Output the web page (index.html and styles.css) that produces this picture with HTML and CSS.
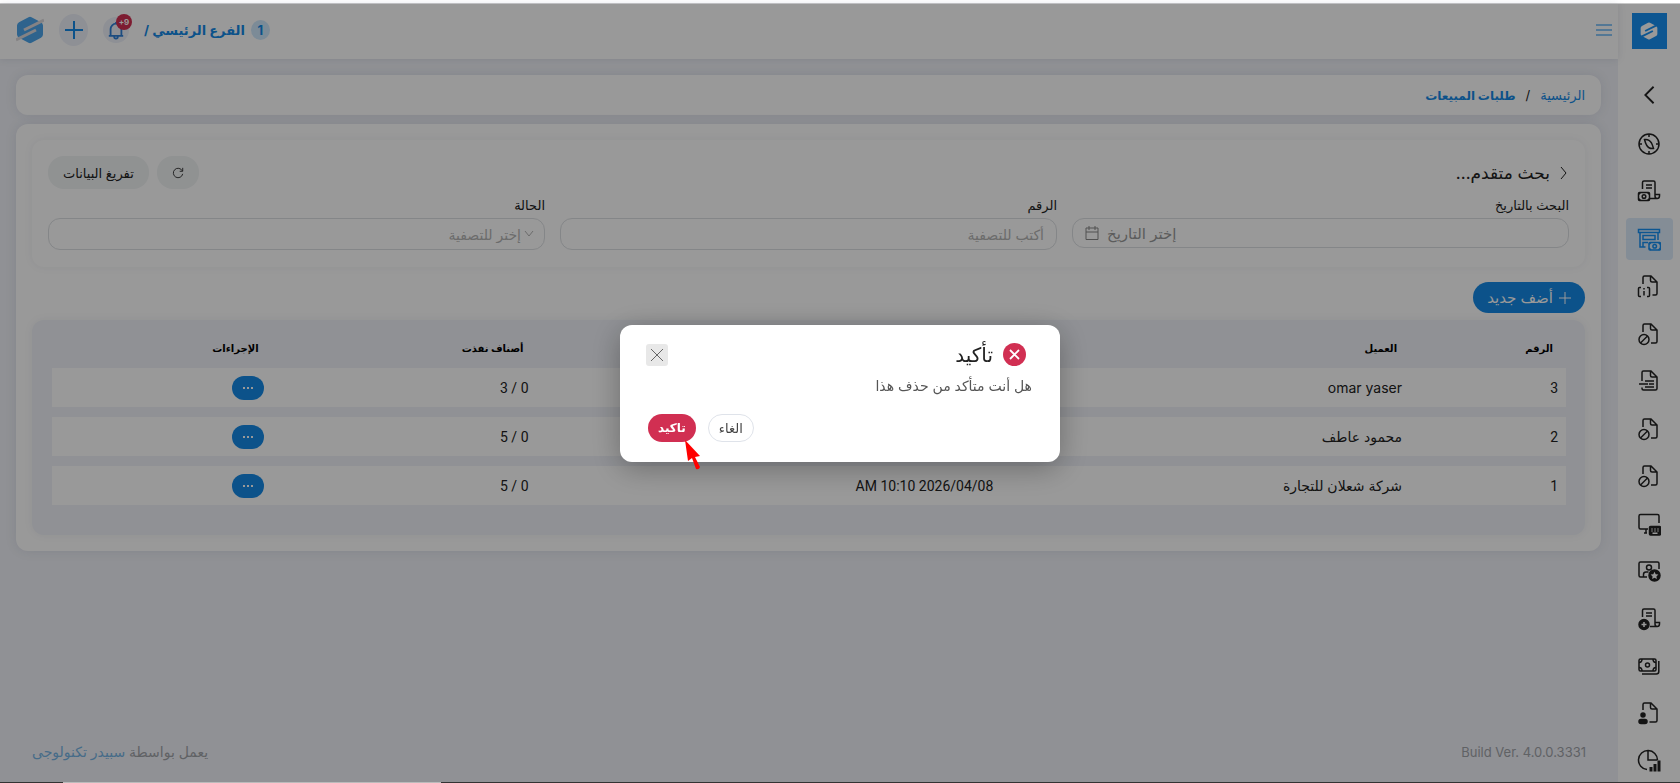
FILE: index.html
```html
<!DOCTYPE html>
<html lang="ar" dir="rtl">
<head>
    <meta charset="UTF-8">
    <meta name="viewport" content="width=device-width, initial-scale=1.0">
    <title>طلبات المبيعات</title>
    <link rel="stylesheet" href="styles.css">
</head>
<body>

<!-- Shared icons -->
<svg class="sprite" aria-hidden="true">
    <symbol id="i-logo" viewBox="0 0 28 28">
        <path d="M12.500 1.200Q14 .4 15.500 1.200L25 6.200Q27 7.500 27 9.500V18.500Q27 20.500 25 21.800L15.500 26.800Q14 27.600 12.500 26.800L3 21.800Q1 20.500 1 18.500V9.500Q1 7.500 3 6.200Z"/>
        <path class="slit" d="M8 14L28 4M0 24L20 14"/>
    </symbol>
    <symbol id="i-file-ban" viewBox="0 0 24 24">
        <path d="M6 10V3.500Q6 2 7.500 2H14l6 6v11.500q0 1.500-1.500 1.500H14M13.500 2v4.500Q13.500 8 15 8h5"/>
        <circle cx="7" cy="17.500" r="5"/><path d="M3.500 21l7-7"/>
    </symbol>
    <symbol id="i-receipt" viewBox="0 0 24 24">
        <path d="M5.500 10V3.500Q5.500 2 7 2h9.500Q18 2 18 3.500V17q0 2.500 2.200 2.500T22.500 17v-1.500H18M13 19.500h7.500M9 6h6M9 9h6"/>
    </symbol>
</svg>

<div class="window-edge"></div>

<div class="app">
    <aside class="sidebar">
        <a class="brand" href="#" aria-label="سبيدر"><svg><use href="#i-logo"/></svg></a>
        <button class="collapse" type="button" aria-label="طي القائمة">
            <svg viewBox="0 0 24 24"><path d="M17 3L8 12l9 9"/></svg>
        </button>
        <nav class="menu">
            <a href="#" aria-label="لوحة التحكم"><svg viewBox="0 0 24 24"><circle cx="12" cy="12" r="10"/><path d="M12 2v3M12 19v3M2 12h3M19 12h3M7.500 7.500c3-.5 5.500 1 7 3.500 1 2 1.500 3.500 2 5.500-3 .5-5.500-1-7-3.500-1-2-1.500-3.500-2-5.500z"/></svg></a>
            <a href="#" aria-label="الفواتير"><svg viewBox="0 0 24 24"><use href="#i-receipt"/><rect x="1.500" y="13.500" width="11" height="8" rx="1"/><circle cx="7" cy="17.500" r="1.800"/><path d="M1.500 15.500l2-2M12.500 15.500l-2-2M1.500 19.500l2 2M12.500 19.500l-2 2"/></svg></a>
            <a class="active" href="#" aria-label="طلبات المبيعات"><svg viewBox="0 0 24 24"><path d="M1.500 2.500h21v3h-21zM3 5.500V20h5.500M21 5.500V13M6 8.500h12v4H6zM6 20v-4.500h5"/><rect x="12" y="15.500" width="11.500" height="7.500" rx="1"/><circle cx="17.700" cy="19.200" r="1.800"/><path d="M12 17.500l2-2M23.500 17.500l-2-2M12 21l2 2M23.500 21l-2 2"/></svg></a>
            <a href="#" aria-label="معلومات"><svg viewBox="0 0 24 24"><path d="M6 10V3.500Q6 2 7.500 2H14l6 6v11.500q0 1.500-1.500 1.500H15.500M13.500 2v4.500Q13.500 8 15 8h5M4 13.500H2.500Q1.500 13.500 1.500 14.500v7q0 1 1 1H4M10 13.500h1.500q1 0 1 1v7q0 1-1 1H10M7 17v4.500M7 14v1.500"/></svg></a>
            <a href="#" aria-label="ملغاة"><svg><use href="#i-file-ban"/></svg></a>
            <a href="#" aria-label="مستند"><svg viewBox="0 0 24 24"><path d="M5 12V3.500Q5 2 6.500 2H14l6 6v11.500q0 1.500-1.500 1.500h-12Q5 21 5 19.500V18.500M13.500 2v4.500Q13.500 8 15 8h5M2 15h9M8 12h9M12 15h5M8 18h9"/></svg></a>
            <a href="#" aria-label="مرتجعات"><svg><use href="#i-file-ban"/></svg></a>
            <a href="#" aria-label="مرفوضة"><svg><use href="#i-file-ban"/></svg></a>
            <a href="#" aria-label="نقطة البيع"><svg viewBox="0 0 24 24"><path d="M22 11V4Q22 2.500 20.500 2.500h-17Q2 2.500 2 4v11.500Q2 17 3.500 17H11M9 17v4M7 21h3"/><rect class="solid" x="12.500" y="14.500" width="11" height="8.500" rx="1"/><path class="cut" d="M14.500 17h1M17.500 17h1M20.500 17h1M14.500 19h1M17.500 19h1M20.500 19h1M15.500 21.300h5"/></svg></a>
            <a href="#" aria-label="العملاء"><svg viewBox="0 0 24 24"><path d="M22 10V4.500Q22 3 20.500 3h-17Q2 3 2 4.500v12Q2 18 3.500 18H10M6.500 18v-2.500Q6.500 13 9 13h2.500"/><circle cx="12" cy="8.500" r="2.500"/><circle class="solid" cx="17.500" cy="16.500" r="5.500"/><path class="star" d="M17.500 12.700l1.200 2.500 2.700.3-2 1.900.5 2.700-2.400-1.300-2.400 1.300.5-2.700-2-1.900 2.700-.3z"/></svg></a>
            <a href="#" aria-label="فاتورة جديدة"><svg viewBox="0 0 24 24"><use href="#i-receipt"/><circle class="solid" cx="7" cy="17.500" r="5"/><path class="cut" d="M7 15v5M4.500 17.500h5"/></svg></a>
            <a href="#" aria-label="المدفوعات"><svg viewBox="0 0 24 24"><rect x="2" y="5" width="17" height="12" rx="1.500"/><circle cx="10.500" cy="11" r="2"/><path d="M2 8.500q3 0 3-3.500M19 8.500q-3 0-3-3.500M2 13.500q3 0 3 3.500M19 13.500q-3 0-3 3.500M21.800 7v10.500q0 2.500-2.500 2.500H5"/></svg></a>
            <a href="#" aria-label="كشف حساب"><svg viewBox="0 0 24 24"><path d="M6 9V3.500Q6 2 7.500 2H14l6 6v11.500q0 1.500-1.500 1.500H12.500M13.500 2v4.500Q13.500 8 15 8h5"/><circle class="solid" cx="6" cy="14" r="2"/><rect class="solid" x="2" y="18.500" width="8" height="4" rx="2"/></svg></a>
            <a href="#" aria-label="التقارير"><svg viewBox="0 0 24 24"><path d="M20.500 11A9.500 9.500 0 1 0 10 20.500M11 2v9h9.500"/><path class="bars" d="M14 18v4.500M18 15v7.500M22 11.500v11"/></svg></a>
        </nav>
    </aside>

    <div class="main">
        <header class="topbar">
            <button class="toggle" type="button" aria-label="القائمة">
                <svg viewBox="0 0 16 14"><path d="M0 2h16M0 7h16M0 12h16"/></svg>
            </button>
            <div class="topbar-end">
                <div class="branch"><span class="branch-no">1</span><span>الفرع الرئيسي /</span></div>
                <button class="bell" type="button" aria-label="التنبيهات">
                    <svg viewBox="0 0 20 22"><path d="M2 17.500h16M4 17.500V10a6 6 0 0 1 12 0v7.500M10 4V2M8 18.500a2 2 0 0 0 4 0"/></svg>
                    <span class="badge">9+</span>
                </button>
                <button class="plus" type="button" aria-label="إضافة">
                    <svg viewBox="0 0 20 20"><path d="M10 1v18M1 10h18"/></svg>
                </button>
                <svg class="avatar"><use href="#i-logo"/></svg>
            </div>
        </header>

        <main class="content">
            <div class="breadcrumb">
                <a href="#">الرئيسية</a><span>/</span><strong>طلبات المبيعات</strong>
            </div>

            <section class="card">
                <form class="panel filters">
                    <div class="filters-head">
                        <h2><svg viewBox="0 0 12 12"><path d="M4 0l5 6-5 6"/></svg>بحث متقدم...</h2>
                        <div class="filters-actions">
                            <button class="pill refresh" type="button" aria-label="تحديث">
                                <svg viewBox="0 0 14 14"><path d="M12 4.500A5.500 5.500 0 1 0 12.500 8M12.500 1v4H9"/></svg>
                            </button>
                            <button class="pill" type="button">تفريغ البيانات</button>
                        </div>
                    </div>
                    <div class="fields">
                        <div class="field">
                            <label for="date">البحث بالتاريخ</label>
                            <div class="box date-box">
                                <svg viewBox="0 0 14 16"><path d="M1 3h12v11.500H1zM1 7h12M4 1v4M10 1v4"/></svg>
                                <input id="date" type="text" placeholder="إختر التاريخ">
                            </div>
                        </div>
                        <div class="field">
                            <label for="number">الرقم</label>
                            <div class="box"><input id="number" type="text" placeholder="أكتب للتصفية"></div>
                        </div>
                        <div class="field">
                            <label for="status">الحالة</label>
                            <div class="box select-box">
                                <svg viewBox="0 0 10 10"><path d="M1 2l4 5 4-5"/></svg>
                                <select id="status"><option>إختر للتصفية</option></select>
                            </div>
                        </div>
                    </div>
                </form>

                <button class="add" type="button"><svg viewBox="0 0 12 12"><path d="M6 0v12M0 6h12"/></svg>أضف جديد</button>

                <div class="panel orders">
                    <table>
                        <thead>
                            <tr>
                                <th class="col-no">الرقم</th>
                                <th class="col-client">العميل</th>
                                <th class="col-date"></th>
                                <th class="col-items">أصناف نفذت</th>
                                <th class="col-actions">الإجراءات</th>
                            </tr>
                        </thead>
                        <tbody>
                            <tr>
                                <td class="num">3</td>
                                <td>omar yaser</td>
                                <td class="num"></td>
                                <td class="num">0 / 3</td>
                                <td><button class="more" type="button" aria-label="خيارات"><i></i><i></i><i></i></button></td>
                            </tr>
                            <tr>
                                <td class="num">2</td>
                                <td>محمود عاطف</td>
                                <td class="num"></td>
                                <td class="num">0 / 5</td>
                                <td><button class="more" type="button" aria-label="خيارات"><i></i><i></i><i></i></button></td>
                            </tr>
                            <tr>
                                <td class="num">1</td>
                                <td>شركة شعلان للتجارة</td>
                                <td class="num">2026/04/08 10:10 AM</td>
                                <td class="num">0 / 5</td>
                                <td><button class="more" type="button" aria-label="خيارات"><i></i><i></i><i></i></button></td>
                            </tr>
                        </tbody>
                    </table>
                </div>
            </section>
        </main>

        <footer class="footer">
            <span class="version" dir="ltr">Build Ver. 4.0.0.3331</span>
            <span>يعمل بواسطة <a href="#">سبيدر تكنولوجى</a></span>
        </footer>
    </div>
</div>

<div class="overlay">
    <div class="modal" role="dialog" aria-modal="true" aria-labelledby="modal-title">
        <div class="modal-head">
            <span class="modal-icon"><svg viewBox="0 0 10 10"><path d="M0 0l10 10M10 0L0 10"/></svg></span>
            <h3 id="modal-title">تأكيد</h3>
            <button class="close" type="button" aria-label="إغلاق"><svg viewBox="0 0 12 12"><path d="M0 0l12 12M12 0L0 12"/></svg></button>
        </div>
        <p>هل أنت متأكد من حذف هذا</p>
        <div class="modal-actions">
            <button class="cancel" type="button">الغاء</button>
            <button class="confirm" type="button">تاكيد
                <svg class="pointer" viewBox="0 0 18 32"><path d="M1 1l15 16-5 1 5 10q-1 3-4 2L8 19l-4 3z"/></svg>
            </button>
        </div>
    </div>
</div>

<div class="taskbar"><i></i></div>

</body>
</html>
```
FILE: styles.css
```css
* {
    box-sizing: border-box;
}
body {
    margin: 0;
    height: 100vh;
    display: flex;
    flex-direction: column;
    overflow: hidden;
    background: #f0f2f8;
    color: #222;
    font-family: Inter, "DejaVu Sans", sans-serif;
    font-size: 14px;
}
svg {
    display: block;
    fill: none;
    stroke: currentColor;
}
button, input, select {
    font-family: inherit;
    margin: 0;
    border: 0;
    background: none;
    color: inherit;
}
button {
    display: flex;
    align-items: center;
    justify-content: center;
    padding: 0;
    cursor: pointer;
}
a {
    color: #1489e6;
    text-decoration: none;
}
.sprite {
    position: absolute;
    width: 0;
    height: 0;
}
.slit {
    fill: none;
    stroke: var(--slit);
    stroke-width: 3;
}
.window-edge {
    flex: none;
    height: 4px;
    background: #fff;
    border-bottom: 1px solid #c8c8c8;
}
.app {
    flex: 1;
    min-height: 0;
    display: flex;
}

/* Sidebar */
.sidebar {
    width: 62px;
    flex: none;
    display: flex;
    flex-direction: column;
    align-items: center;
    background: #fff;
    padding-top: 9px;
}
.brand {
    --slit: #1690f2;
    display: flex;
    align-items: center;
    justify-content: center;
    width: 35px;
    height: 36px;
    background: #1690f2;
}
.brand svg {
    width: 18px;
    height: 20px;
    fill: #fff;
    stroke: none;
}
.collapse {
    width: 42px;
    height: 42px;
    margin: 25px 0 7px;
}
.collapse svg {
    width: 22px;
    stroke-width: 2;
}
.menu {
    flex: 1;
    display: flex;
    flex-direction: column;
    justify-content: space-between;
}
.menu a {
    display: flex;
    align-items: center;
    justify-content: center;
    width: 47px;
    height: 42px;
    border-radius: 4px;
    color: #222;
}
.menu a.active {
    background: #dcebfb;
    color: #1690f2;
}
.menu svg {
    width: 24px;
    height: 24px;
    stroke-width: 1.5;
}
.solid {
    fill: currentColor;
}
.cut {
    stroke: #fff;
}
.star {
    fill: #fff;
    stroke: none;
}
.bars {
    stroke-width: 3;
}

/* Top bar */
.main {
    flex: 1;
    min-width: 0;
    display: flex;
    flex-direction: column;
}
.topbar {
    flex: none;
    height: 55px;
    display: flex;
    align-items: center;
    justify-content: space-between;
    padding: 0 6px 3px 16px;
    background: #fff;
    box-shadow: 0 0 8px rgba(40, 50, 90, .12);
}
.toggle svg {
    width: 16px;
    height: 14px;
    color: #1690f2;
}
.topbar-end {
    display: flex;
    align-items: center;
    gap: 15px;
}
.branch {
    display: flex;
    align-items: center;
    gap: 6px;
    color: #1489e6;
    font-size: 13px;
    font-weight: bold;
}
.branch-no {
    width: 19px;
    height: 20px;
    line-height: 20px;
    border-radius: 50%;
    background: #cfe8fc;
    text-align: center;
}
.bell, .plus {
    position: relative;
    border-radius: 50%;
    background: #edf0f9;
    color: #1489e6;
}
.bell {
    width: 26px;
    height: 26px;
    color: #2f7fd6;
}
.bell svg {
    width: 18px;
    height: 20px;
    stroke-width: 2;
}
.badge {
    position: absolute;
    top: -3px;
    right: -3px;
    width: 16px;
    height: 16px;
    border-radius: 50%;
    background: #d12f52;
    color: #fff;
    font-size: 8px;
    font-weight: bold;
    line-height: 16px;
}
.plus {
    width: 29px;
    height: 32px;
}
.plus svg {
    width: 20px;
    height: 20px;
    stroke-width: 2;
}
.avatar {
    --slit: #dcd9dc;
    width: 28px;
    height: 28px;
    fill: #4da6ec;
    stroke: none;
}

/* Content */
.content {
    flex: 1;
    display: flex;
    flex-direction: column;
    gap: 9px;
    padding: 16px 17px 0 16px;
}
.breadcrumb, .card {
    background: #fff;
    border-radius: 12px;
    box-shadow: 0 0 12px rgba(40, 50, 90, .1);
}
.breadcrumb {
    display: flex;
    align-items: center;
    gap: 10px;
    height: 40px;
    padding: 0 16px;
    font-size: 13px;
}
.breadcrumb strong {
    color: #1489e6;
    font-size: 12px;
}
.card {
    display: flex;
    flex-direction: column;
    align-items: flex-start;
    padding: 16px;
}
.panel {
    width: 100%;
    border-radius: 12px;
    box-shadow: 0 0 10px rgba(40, 50, 90, .06);
}
.filters {
    padding: 16px 16px 17px;
}
.filters-head {
    display: flex;
    justify-content: space-between;
    align-items: center;
}
.filters h2 {
    display: flex;
    align-items: center;
    gap: 7px;
    margin: 0;
    font-size: 17px;
    font-weight: normal;
}
.filters h2 svg {
    width: 12px;
    height: 12px;
}
.filters-actions {
    display: flex;
    gap: 8px;
}
.pill {
    height: 33px;
    padding: 0 15px;
    border-radius: 16px;
    background: #f0f3f4;
    font-size: 13px;
}
.refresh svg {
    width: 12px;
    height: 12px;
}
.fields {
    display: grid;
    grid-template-columns: repeat(3, 1fr);
    gap: 15px;
    align-items: start;
    padding-top: 6px;
}
.field label {
    display: block;
    line-height: 20px;
    margin-bottom: 3px;
    font-size: 13px;
}
.box {
    display: flex;
    align-items: center;
    height: 32px;
    padding: 0 12px;
    border: 1px solid #dde0e3;
    border-radius: 12px;
    color: #b4b4b4;
}
.box input, .box select {
    flex: 1;
    min-width: 0;
    padding: 0;
    font-size: 14px;
    outline: 0;
    appearance: none;
}
.box input::placeholder {
    color: #b4b4b4;
    opacity: 1;
}
.date-box {
    direction: ltr;
    gap: 8px;
    height: 30px;
    color: #888;
}
.date-box input {
    font-size: 15px;
}
.date-box input::placeholder {
    color: #999;
}
.date-box svg {
    width: 14px;
    height: 16px;
}
.select-box {
    padding: 0 10px;
    gap: 3px;
}
.select-box svg {
    width: 10px;
    height: 10px;
}
.add {
    gap: 6px;
    height: 31px;
    margin: 15px 0 7px;
    padding: 0 14px;
    border-radius: 16px;
    background: #1489e6;
    color: #fff;
    font-size: 15px;
}
.add svg {
    width: 12px;
    height: 12px;
}

/* Orders table */
.orders {
    background: #f0f2f8;
    padding: 0 19px 20px 20px;
}
.orders table {
    width: 100%;
    table-layout: fixed;
    border-collapse: separate;
    border-spacing: 0 10px;
}
.orders th {
    height: 28px;
    padding: 8px 13px 0;
    color: #000;
    font-size: 10px;
    text-align: right;
}
.orders td {
    height: 39px;
    padding: 0 8px;
    background: #fff;
}
.orders .num {
    font-family: Roboto, sans-serif;
}
.col-no {
    width: 10.3%;
}
.col-client {
    width: 27%;
}
.col-date {
    width: 30.7%;
}
.col-items {
    width: 17.5%;
}
.more {
    gap: 2px;
    width: 32px;
    height: 24px;
    border-radius: 12px;
    background: #1489e6;
}
.more i {
    width: 2px;
    height: 2px;
    background: #fff;
}

.footer {
    display: flex;
    justify-content: space-between;
    align-items: center;
    padding: 0 32px 22px;
    color: #a0a3a8;
    font-size: 14px;
}
.footer .version {
    font-size: 13px;
}
.footer a {
    color: #76b4e4;
}

/* Confirm dialog */
.overlay {
    position: fixed;
    inset: 4px 0 1px;
    display: flex;
    align-items: center;
    justify-content: center;
    background: rgba(0, 0, 0, .4);
}
.modal {
    width: 440px;
    padding: 18px 28px 20px 26px;
    background: #fff;
    border-radius: 12px;
    box-shadow: 0 6px 30px rgba(0, 0, 0, .3);
}
.modal-head {
    display: flex;
    align-items: center;
    gap: 10px;
    padding-right: 6px;
}
.modal-icon {
    display: flex;
    align-items: center;
    justify-content: center;
    width: 23px;
    height: 23px;
    border-radius: 50%;
    background: #d12f52;
    color: #fff;
}
.modal-icon svg {
    width: 9px;
    height: 9px;
    overflow: visible;
    stroke-width: 2;
}
.modal h3 {
    flex: 1;
    margin: 0;
    font-size: 20px;
    line-height: 24px;
    font-weight: normal;
}
.close {
    width: 22px;
    height: 22px;
    border-radius: 3px;
    background: #e8e8e8;
    color: #666;
}
.close svg {
    width: 12px;
    height: 12px;
}
.modal p {
    margin: 8px 0 17px;
    line-height: 22px;
    color: #555;
}
.modal-actions {
    display: flex;
    justify-content: flex-end;
    gap: 12px;
    padding-left: 2px;
}
.cancel, .confirm {
    height: 28px;
    padding: 0 10px;
    border-radius: 14px;
    font-size: 13px;
}
.cancel {
    border: 1px solid #dfe3ea;
    color: #444;
}
.confirm {
    position: relative;
    background: #d12f52;
    color: #fff;
    font-size: 12px;
    font-weight: bold;
}
.pointer {
    position: absolute;
    left: 36px;
    top: 25px;
    width: 18px;
    height: 32px;
    fill: #f00;
    stroke: none;
}

.taskbar {
    flex: none;
    height: 1px;
    direction: ltr;
    background: #333;
}
.taskbar i {
    display: block;
    width: 378px;
    height: 1px;
    margin-left: 63px;
    background: #bbb;
}
```
